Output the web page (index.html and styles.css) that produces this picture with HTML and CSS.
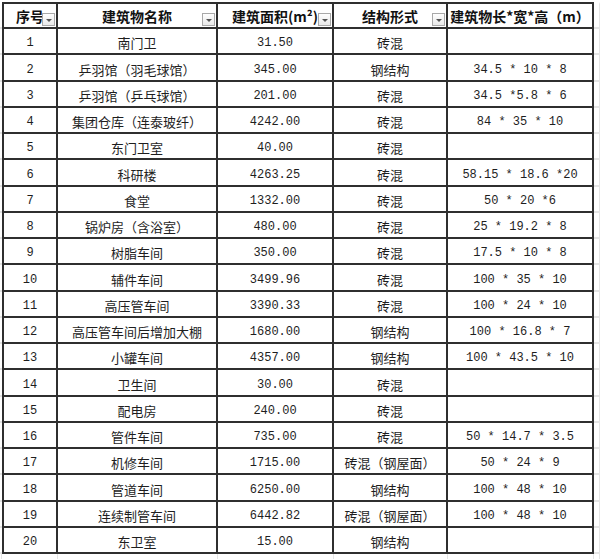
FILE: index.html
```html
<!DOCTYPE html>
<html lang="zh-CN">
<head>
<meta charset="utf-8">
<title>建筑物一览表</title>
<link rel="stylesheet" href="styles.css">
</head>
<body>
<div class="sheet">
<table class="grid">
<colgroup>
<col class="c-gap-l"><col class="c1"><col class="c2"><col class="c3"><col class="c4"><col class="c5"><col class="c-gap-r">
</colgroup>
<thead>
<tr class="head">
<td class="gap gl"></td>
<th class="first"><span class="ht">序号</span><span class="filter"></span></th>
<th><span class="ht">建筑物名称</span><span class="filter"></span></th>
<th><span class="ht">建筑面积(m²)</span><span class="filter"></span></th>
<th><span class="ht">结构形式</span><span class="filter"></span></th>
<th><span class="ht">建筑物长*宽*高（m）</span></th>
<td class="gap gr"></td>
</tr>
</thead>
<tbody>
<tr><td class="gap gl"></td><td class="num first">1</td><td>南门卫</td><td class="num area">31.50</td><td>砖混</td><td class="num"></td><td class="gap gr"></td></tr>
<tr><td class="gap gl"></td><td class="num first">2</td><td>乒羽馆（羽毛球馆）</td><td class="num area">345.00</td><td>钢结构</td><td class="num">34.5 * 10 * 8</td><td class="gap gr"></td></tr>
<tr><td class="gap gl"></td><td class="num first">3</td><td>乒羽馆（乒乓球馆）</td><td class="num area">201.00</td><td>砖混</td><td class="num">34.5 *5.8 * 6</td><td class="gap gr"></td></tr>
<tr><td class="gap gl"></td><td class="num first">4</td><td>集团仓库（连泰玻纤）</td><td class="num area">4242.00</td><td>砖混</td><td class="num">84 * 35 * 10</td><td class="gap gr"></td></tr>
<tr><td class="gap gl"></td><td class="num first">5</td><td>东门卫室</td><td class="num area">40.00</td><td>砖混</td><td class="num"></td><td class="gap gr"></td></tr>
<tr><td class="gap gl"></td><td class="num first">6</td><td>科研楼</td><td class="num area">4263.25</td><td>砖混</td><td class="num">58.15 * 18.6 *20</td><td class="gap gr"></td></tr>
<tr><td class="gap gl"></td><td class="num first">7</td><td>食堂</td><td class="num area">1332.00</td><td>砖混</td><td class="num">50 * 20 *6</td><td class="gap gr"></td></tr>
<tr><td class="gap gl"></td><td class="num first">8</td><td>锅炉房（含浴室）</td><td class="num area">480.00</td><td>砖混</td><td class="num">25 * 19.2 * 8</td><td class="gap gr"></td></tr>
<tr><td class="gap gl"></td><td class="num first">9</td><td>树脂车间</td><td class="num area">350.00</td><td>砖混</td><td class="num">17.5 * 10 * 8</td><td class="gap gr"></td></tr>
<tr><td class="gap gl"></td><td class="num first">10</td><td>辅件车间</td><td class="num area">3499.96</td><td>砖混</td><td class="num">100 * 35 * 10</td><td class="gap gr"></td></tr>
<tr><td class="gap gl"></td><td class="num first">11</td><td>高压管车间</td><td class="num area">3390.33</td><td>砖混</td><td class="num">100 * 24 * 10</td><td class="gap gr"></td></tr>
<tr><td class="gap gl"></td><td class="num first">12</td><td>高压管车间后增加大棚</td><td class="num area">1680.00</td><td>钢结构</td><td class="num">100 * 16.8 * 7</td><td class="gap gr"></td></tr>
<tr><td class="gap gl"></td><td class="num first">13</td><td>小罐车间</td><td class="num area">4357.00</td><td>钢结构</td><td class="num">100 * 43.5 * 10</td><td class="gap gr"></td></tr>
<tr><td class="gap gl"></td><td class="num first">14</td><td>卫生间</td><td class="num area">30.00</td><td>砖混</td><td class="num"></td><td class="gap gr"></td></tr>
<tr><td class="gap gl"></td><td class="num first">15</td><td>配电房</td><td class="num area">240.00</td><td>砖混</td><td class="num"></td><td class="gap gr"></td></tr>
<tr><td class="gap gl"></td><td class="num first">16</td><td>管件车间</td><td class="num area">735.00</td><td>砖混</td><td class="num">50 * 14.7 * 3.5</td><td class="gap gr"></td></tr>
<tr><td class="gap gl"></td><td class="num first">17</td><td>机修车间</td><td class="num area">1715.00</td><td>砖混（钢屋面）</td><td class="num">50 * 24 * 9</td><td class="gap gr"></td></tr>
<tr><td class="gap gl"></td><td class="num first">18</td><td>管道车间</td><td class="num area">6250.00</td><td>钢结构</td><td class="num">100 * 48 * 10</td><td class="gap gr"></td></tr>
<tr><td class="gap gl"></td><td class="num first">19</td><td>连续制管车间</td><td class="num area">6442.82</td><td>砖混（钢屋面）</td><td class="num">100 * 48 * 10</td><td class="gap gr"></td></tr>
<tr><td class="gap gl"></td><td class="num first">20</td><td>东卫室</td><td class="num area">15.00</td><td>钢结构</td><td class="num"></td><td class="gap gr"></td></tr>
<tr class="tail"><td class="gap gl"></td><td class="first"></td><td></td><td></td><td></td><td></td><td class="gap gr"></td></tr>
</tbody>
</table>
</div>
</body>
</html>
```
FILE: styles.css
```css
html, body {
  margin: 0;
  padding: 0;
  background: #ffffff;
}

.sheet {
  width: 600px;
  height: 559px;
  padding-top: 2px;
  box-sizing: border-box;
  overflow: hidden;
  background: #ffffff;
}

.grid {
  border-collapse: separate;
  border-spacing: 0;
  table-layout: fixed;
  width: 600px;
  font-family: "Noto Sans CJK SC", "Liberation Sans", sans-serif;
  font-size: 13px;
  color: #1e1e1e;
}

.c-gap-l { width: 2px; }
.c1 { width: 56px; }
.c2 { width: 160px; }
.c3 { width: 116px; }
.c4 { width: 114px; }
.c5 { width: 146px; }
.c-gap-r { width: 6px; }

.grid th,
.grid td {
  box-sizing: border-box;
  border: 0;
  border-right: 2px solid #2f2f2f;
  border-bottom: 2px solid #2f2f2f;
  padding: 4px 0 0;
  text-align: center;
  vertical-align: middle;
  white-space: nowrap;
  overflow: hidden;
  line-height: 16px;
}

.grid .first {
  border-left: 2px solid #2f2f2f;
}

.grid td.gap {
  padding: 0;
  border-bottom: 2px solid #e4e4e4;
  border-right: 0;
}

.grid td.gr {
  border-right: 1px solid #e4e4e4;
}

.head th {
  border-top: 2px solid #2f2f2f;
  padding: 0;
  position: relative;
  font-weight: 700;
  font-size: 14px;
  color: #111111;
}

.head td.gap {
  border-top: 2px solid transparent;
}

.head {
  height: 27px;
}

tbody tr {
  height: 26px;
}

tbody tr:nth-child(4n+2) {
  height: 27px;
}

.grid tr.tail {
  height: 5px;
}

.grid tr.tail td {
  height: 5px;
  padding: 0;
  border-bottom: 0;
  border-right: 1px solid #e4e4e4;
}

.grid tr.tail td.first {
  border-left: 0;
}

.grid tr.tail td.gl {
  border-right: 1px solid #e4e4e4;
}

.ht {
  display: inline-block;
}

.num {
  font-family: "Liberation Mono", "DejaVu Sans Mono", monospace;
  font-size: 12px;
}

.area {
  padding-right: 5px;
}

.filter {
  position: absolute;
  right: 1px;
  bottom: 1px;
  width: 11px;
  height: 11px;
  border: 1px solid #a9a9a9;
  background: linear-gradient(#ffffff, #e9e9e9);
}

.filter::after {
  content: "";
  position: absolute;
  left: 3px;
  top: 5px;
  width: 0;
  height: 0;
  border-left: 3px solid transparent;
  border-right: 3px solid transparent;
  border-top: 3px solid #555555;
}
```
